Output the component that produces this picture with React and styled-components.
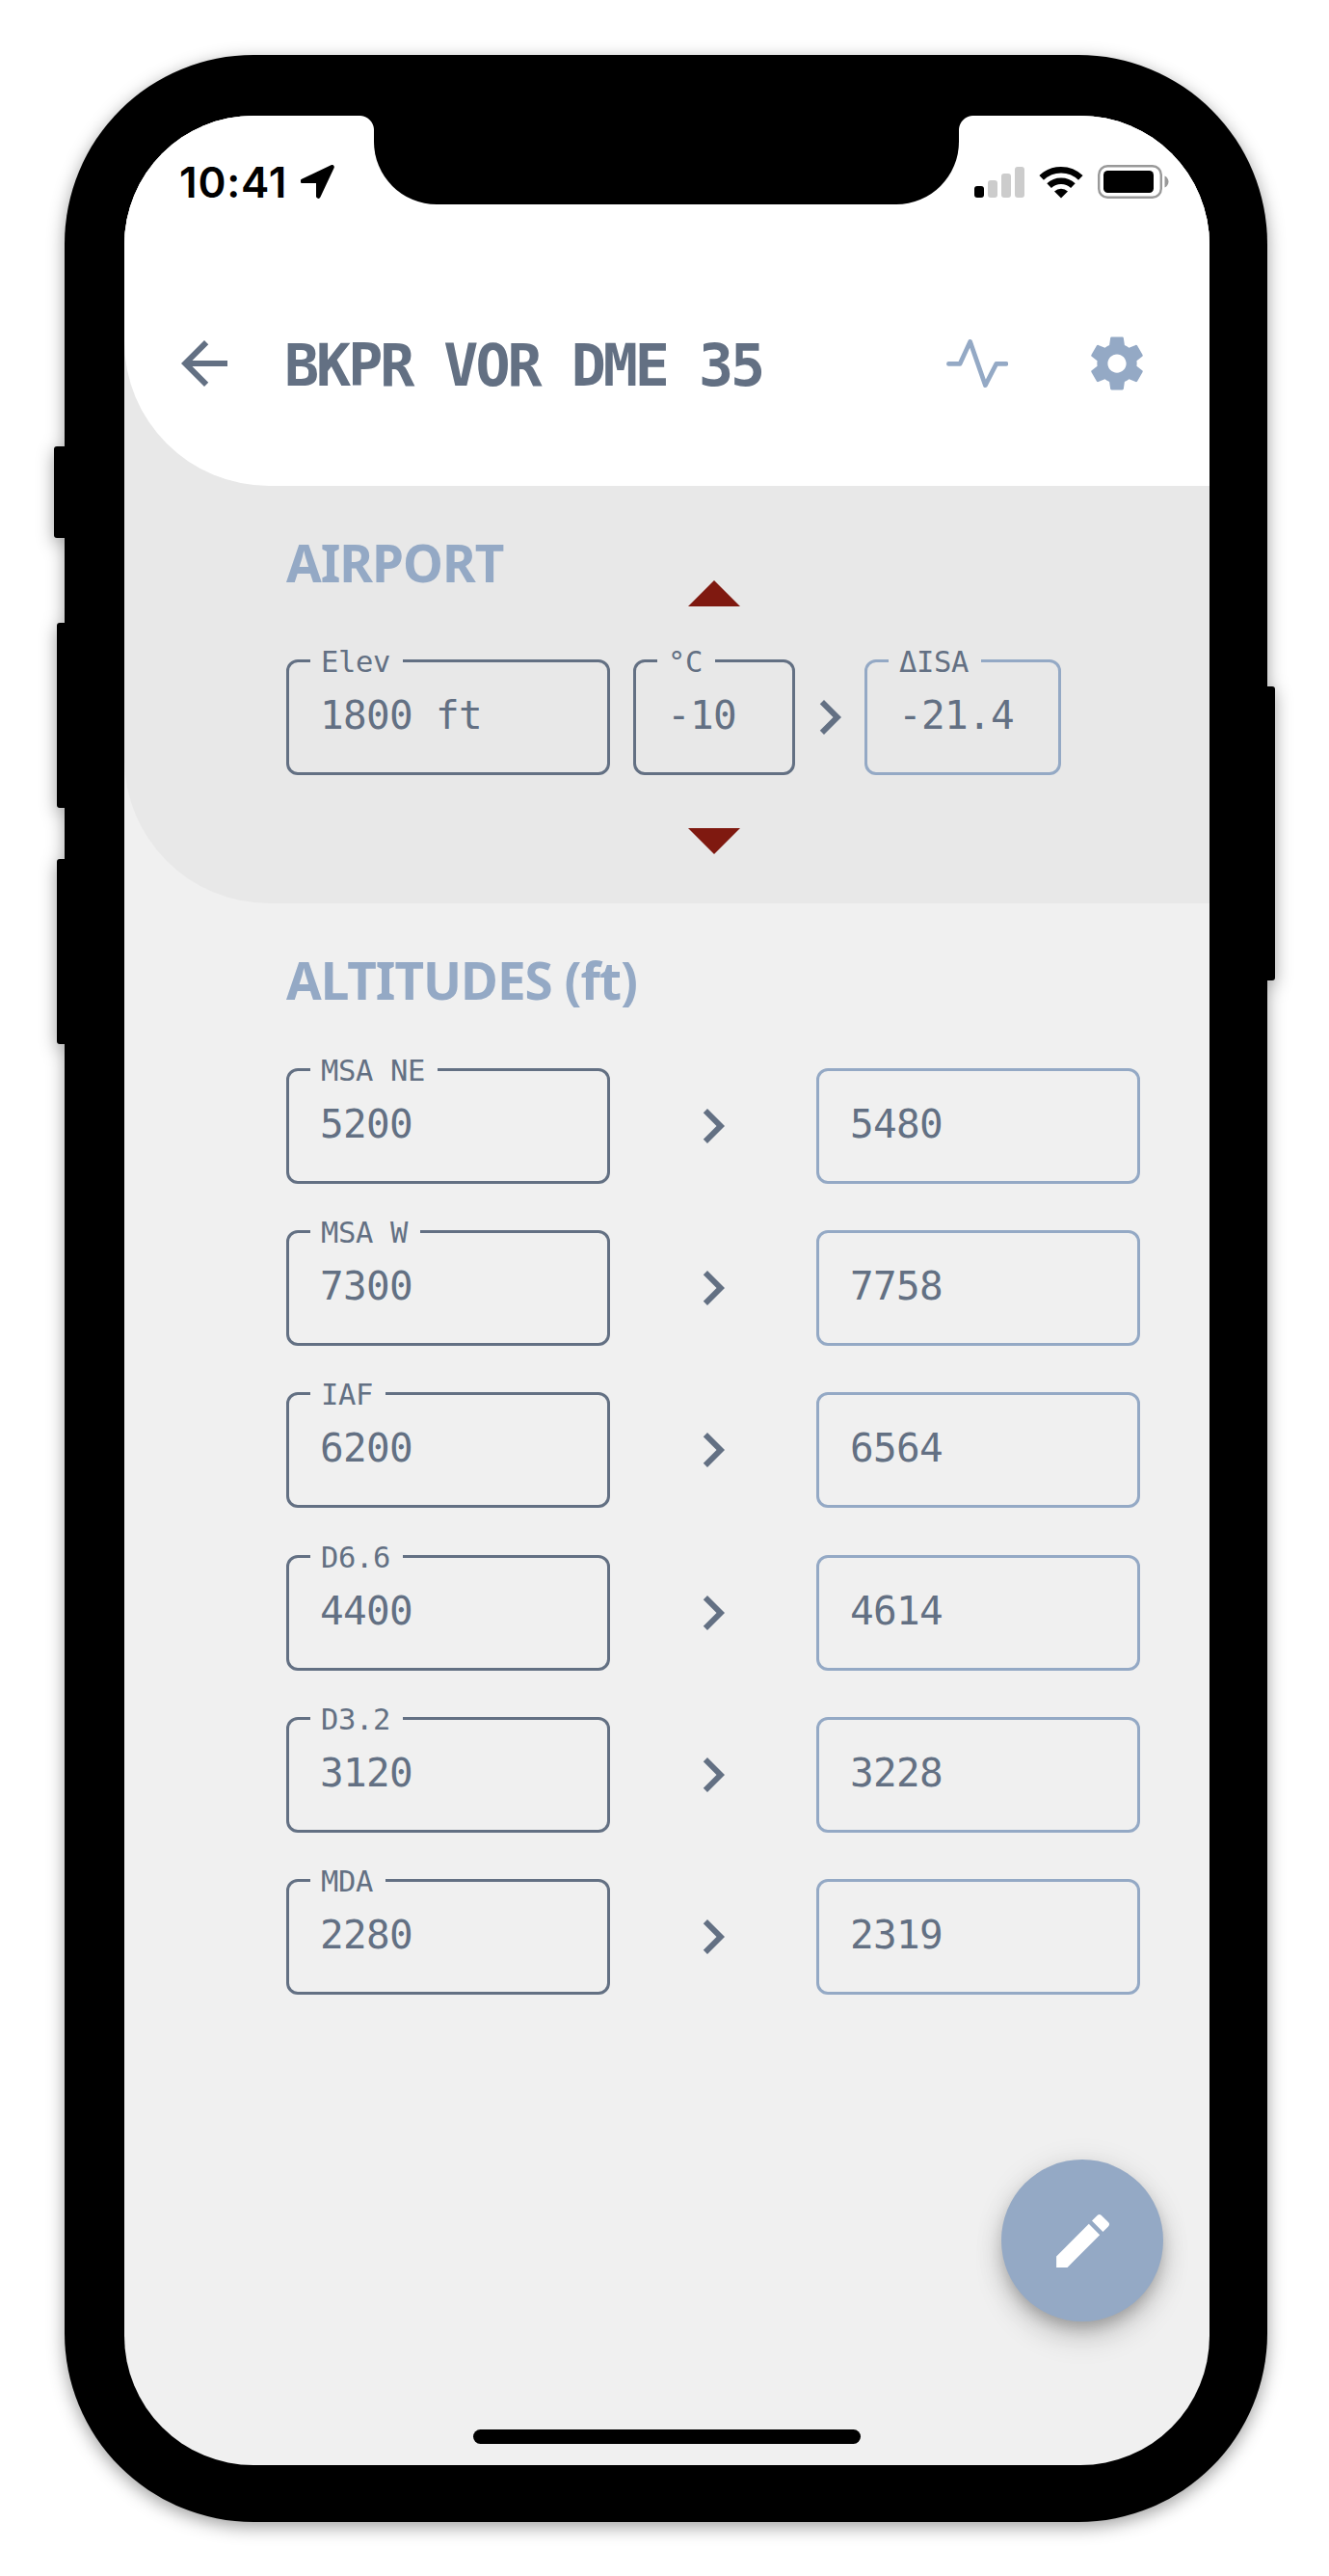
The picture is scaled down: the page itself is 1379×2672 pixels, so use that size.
import React from 'react';
import styled, { createGlobalStyle } from 'styled-components';
import { MdArrowBack, MdChevronRight, MdEdit } from 'react-icons/md';

const SLATE = '#637083';
const BLUE = '#94a9c5';

const GlobalStyle = createGlobalStyle`
  body {
    margin: 0;
    background: #fff;
  }

  * {
    box-sizing: border-box;
  }
`;

const Page = styled.main`
  width: 1379px;
  height: 2672px;
  padding: 57px 0 0 67px;
  overflow: hidden;
`;

const Phone = styled.div`
  position: relative;
  width: 1248px;
  height: 2559px;
  padding: 63px 60px 59px 62px;
  background: #000;
  border-radius: 196px;
  filter: drop-shadow(0 5px 9px rgba(0, 0, 0, 0.38));
`;

const SideKey = styled.span`
  position: absolute;
  top: ${(props) => props.$top}px;
  ${(props) => props.$side}: -${(props) => props.$out}px;
  width: 20px;
  height: ${(props) => props.$height}px;
  background: #000;
  border-radius: 3px;
`;

const Screen = styled.div`
  --surface: #f0f0f0;
  position: relative;
  width: 1126px;
  height: 2437px;
  background: var(--surface);
  border-radius: 134px;
  overflow: hidden;
`;

const Notch = styled.div`
  position: absolute;
  top: -1px;
  left: 259px;
  width: 607px;
  height: 93px;
  background: #000;
  border-radius: 0 0 65px 65px;

  &::before,
  &::after {
    content: '';
    position: absolute;
    top: 1px;
    width: 15px;
    height: 15px;
  }

  &::before {
    right: 100%;
    background: radial-gradient(circle at 0 100%, transparent 14.5px, #000 15.5px);
  }

  &::after {
    left: 100%;
    background: radial-gradient(circle at 100% 100%, transparent 14.5px, #000 15.5px);
  }
`;

const AirportPanel = styled.section`
  --surface: #e8e8e8;
  height: 817px;
  background: var(--surface);
  border-bottom-left-radius: 150px;
`;

const Header = styled.header`
  height: 384px;
  background: #fff;
  border-bottom-left-radius: 150px;
`;

const StatusBar = styled.div`
  display: flex;
  align-items: center;
  height: 137px;
  padding: 0 42px 0 57px;
`;

const Time = styled.span`
  width: 126px;
  font-family: Inter, sans-serif;
  font-size: 44px;
  font-weight: 600;
  line-height: 52px;
  letter-spacing: 0.8px;
  white-space: nowrap;
  color: #000;
`;

const StatusIcons = styled.div`
  display: flex;
  align-items: center;
  gap: 15px;
  margin-left: auto;
`;

const Toolbar = styled.div`
  display: flex;
  align-items: center;
  height: 72px;
  margin-top: 84px;
  padding: 0 63px 0 47px;
`;

const BackButton = styled.button`
  width: 72px;
  height: 72px;
  padding: 0;
  border: none;
  background: none;
  color: ${SLATE};
  font-size: 72px;
  line-height: 0;
`;

const Title = styled.h1`
  flex: 1;
  margin: 3px 0 0 47px;
  font-family: 'DejaVu Sans Mono', monospace;
  font-size: 60px;
  font-weight: 700;
  line-height: 72px;
  letter-spacing: -3.05px;
  white-space: nowrap;
  color: ${SLATE};
`;

const Actions = styled.div`
  display: flex;
  align-items: center;
  gap: 80px;
`;

const SectionTitle = styled.h2`
  margin: 0;
  padding: 46px 0 0 168px;
  height: 122px;
  font-family: 'Noto Sans', sans-serif;
  font-size: 53px;
  font-weight: 700;
  line-height: 68px;
  letter-spacing: ${(props) => props.$tracking}px;
  color: ${BLUE};
`;

const AirportRow = styled.div`
  display: flex;
  align-items: center;
  height: 284px;
  margin-top: -24px;
  padding-left: 168px;
`;

const Stepper = styled.div`
  display: flex;
  flex-direction: column;
  align-items: center;
  gap: 55px;
  margin-left: 24px;
`;

const Triangle = styled.span`
  width: 54px;
  height: 27px;
  background: #7f1910;
  clip-path: ${(props) =>
    props.$down ? 'polygon(0 0, 100% 0, 50% 100%)' : 'polygon(0 100%, 100% 100%, 50% 0)'};
`;

const Field = styled.div`
  position: relative;
  width: ${(props) => props.$width || 336}px;
  height: 120px;
  padding: 29px 0 0 32px;
  border: 3px solid ${(props) => (props.$result ? BLUE : SLATE)};
  border-radius: 12px;
  font-family: 'DejaVu Sans Mono', monospace;
  font-size: 41px;
  line-height: 52px;
  letter-spacing: -0.68px;
  white-space: nowrap;
  color: ${SLATE};
`;

const FieldLabel = styled.span`
  position: absolute;
  top: -18px;
  left: 22px;
  padding: 0 13px 0 11px;
  background: var(--surface);
  font-size: 30.5px;
  line-height: 36px;
  letter-spacing: -0.36px;
`;

const Arrow = styled.div`
  display: flex;
  justify-content: center;
  width: ${(props) => props.$width}px;
  font-size: 72px;
  color: ${SLATE};
`;

const AltitudeList = styled.div`
  display: flex;
  flex-direction: column;
  gap: 48.2px;
  margin-top: 49px;
  padding-left: 168px;
`;

const AltitudeRow = styled.div`
  display: flex;
  align-items: center;
`;

const EditButton = styled.button`
  position: absolute;
  left: 910px;
  top: 2120px;
  display: flex;
  align-items: center;
  justify-content: center;
  width: 168px;
  height: 168px;
  padding: 0;
  border: none;
  border-radius: 50%;
  background: ${BLUE};
  color: #fff;
  font-size: 73px;
  box-shadow:
    0 9px 15px -3px rgba(0, 0, 0, 0.2),
    0 18px 30px rgba(0, 0, 0, 0.14),
    0 3px 30px rgba(0, 0, 0, 0.1);
`;

const HomeIndicator = styled.div`
  position: absolute;
  bottom: 22px;
  left: 362px;
  width: 402px;
  height: 15px;
  border-radius: 8px;
  background: #000;
`;

const altitudes = [
  { label: 'MSA NE', value: '5200', corrected: '5480' },
  { label: 'MSA W', value: '7300', corrected: '7758' },
  { label: 'IAF', value: '6200', corrected: '6564' },
  { label: 'D6.6', value: '4400', corrected: '4614' },
  { label: 'D3.2', value: '3120', corrected: '3228' },
  { label: 'MDA', value: '2280', corrected: '2319' },
];

const LocationIcon = () => (
  <svg width="35" height="35" viewBox="0 0 35 35">
    <path
      d="M2 16.8 32.5 2.3 18.3 32.5V16.8Z"
      fill="#000"
      stroke="#000"
      strokeWidth="4.6"
      strokeLinejoin="round"
    />
  </svg>
);

const SignalIcon = () => (
  <svg width="52" height="34" viewBox="0 0 52 34">
    <rect x="0" y="21" width="10" height="12" rx="3" fill="#000" />
    <rect x="14" y="15" width="10" height="18" rx="3" fill="#ccc" />
    <rect x="28" y="8" width="10" height="25" rx="3" fill="#ccc" />
    <rect x="42" y="1" width="10" height="32" rx="3" fill="#ccc" />
  </svg>
);

const WifiIcon = () => (
  <svg width="46" height="34" viewBox="0 0 46 34">
    <g fill="none" stroke="#000" strokeWidth="6.6">
      <path d="M2.7 12.4a29.2 29.2 0 0 1 40.6 0" />
      <path d="M10.6 20.7a17.9 17.9 0 0 1 24.8 0" />
    </g>
    <path d="M23 33.5 16 26.6a10.1 10.1 0 0 1 14 0Z" fill="#000" />
  </svg>
);

const BatteryIcon = () => (
  <svg width="74" height="35" viewBox="0 0 74 35">
    <rect x="1.2" y="1.2" width="64.6" height="32.6" rx="9" fill="none" stroke="#999" strokeWidth="2.4" />
    <rect x="6" y="6" width="52" height="23" rx="4.5" fill="#000" />
    <path d="M69.5 11.5c2 .8 4 3 4 6s-2 5.2-4 6z" fill="#999" />
  </svg>
);

const ActivityIcon = () => (
  <svg width="64" height="50" viewBox="0 0 64 50">
    <path
      d="M2.4 25.4H14L24.6 2.4 40.4 47.6 51.8 25.4H62"
      fill="none"
      stroke={BLUE}
      strokeWidth="4.7"
      strokeLinecap="round"
      strokeLinejoin="round"
    />
  </svg>
);

const SettingsIcon = () => (
  <svg width="66" height="66" viewBox="0 0 24 24" fill={BLUE}>
    <path d="M19.43 12.98c.04-.32.07-.64.07-.98s-.03-.66-.07-.98l2.11-1.65c.19-.15.24-.42.12-.64l-2-3.46c-.12-.22-.39-.3-.61-.22l-2.49 1c-.52-.4-1.08-.73-1.69-.98l-.38-2.65C14.46 2.18 14.25 2 14 2h-4c-.25 0-.46.18-.49.42l-.38 2.65c-.61.25-1.17.59-1.69.98l-2.49-1c-.23-.09-.49 0-.61.22l-2 3.46c-.13.22-.07.49.12.64l2.11 1.65c-.04.32-.07.65-.07.98s.03.66.07.98l-2.11 1.65c-.19.15-.24.42-.12.64l2 3.46c.12.22.39.3.61.22l2.49-1c.52.4 1.08.73 1.69.98l.38 2.65c.03.24.24.42.49.42h4c.25 0 .46-.18.49-.42l.38-2.65c.61-.25 1.17-.59 1.69-.98l2.49 1c.23.09.49 0 .61-.22l2-3.46c.12-.22.07-.49-.12-.64l-2.11-1.65zM12 15.5c-1.93 0-3.5-1.57-3.5-3.5s1.57-3.5 3.5-3.5 3.5 1.57 3.5 3.5-1.57 3.5-3.5 3.5z" />
  </svg>
);

const App = () => {
  return (
    <Page>
      <GlobalStyle />
      <Phone>
        <SideKey $side="left" $out={11} $top={406} $height={95} />
        <SideKey $side="left" $out={8} $top={589} $height={192} />
        <SideKey $side="left" $out={8} $top={834} $height={192} />
        <SideKey $side="right" $out={8} $top={655} $height={305} />

        <Screen>
          <AirportPanel>
            <Header>
              <StatusBar>
                <Time>10:41</Time>
                <LocationIcon />
                <StatusIcons>
                  <SignalIcon />
                  <WifiIcon />
                  <BatteryIcon />
                </StatusIcons>
              </StatusBar>
              <Toolbar>
                <BackButton>
                  <MdArrowBack />
                </BackButton>
                <Title>BKPR VOR DME 35</Title>
                <Actions>
                  <ActivityIcon />
                  <SettingsIcon />
                </Actions>
              </Toolbar>
            </Header>

            <SectionTitle $tracking={-1}>AIRPORT</SectionTitle>
            <AirportRow>
              <Field>
                <FieldLabel>Elev</FieldLabel>
                1800 ft
              </Field>
              <Stepper>
                <Triangle />
                <Field $width={168}>
                  <FieldLabel>°C</FieldLabel>
                  -10
                </Field>
                <Triangle $down />
              </Stepper>
              <Arrow $width={72}>
                <MdChevronRight />
              </Arrow>
              <Field $width={204} $result>
                <FieldLabel>ΔISA</FieldLabel>
                -21.4
              </Field>
            </AirportRow>
          </AirportPanel>

          <section>
            <SectionTitle $tracking={-1}>ALTITUDES (ft)</SectionTitle>
            <AltitudeList>
              {altitudes.map((row) => (
                <AltitudeRow key={row.label}>
                  <Field>
                    <FieldLabel>{row.label}</FieldLabel>
                    {row.value}
                  </Field>
                  <Arrow $width={214}>
                    <MdChevronRight />
                  </Arrow>
                  <Field $result>{row.corrected}</Field>
                </AltitudeRow>
              ))}
            </AltitudeList>
          </section>

          <EditButton>
            <MdEdit />
          </EditButton>
          <HomeIndicator />
          <Notch />
        </Screen>
      </Phone>
    </Page>
  );
};

export default App;
